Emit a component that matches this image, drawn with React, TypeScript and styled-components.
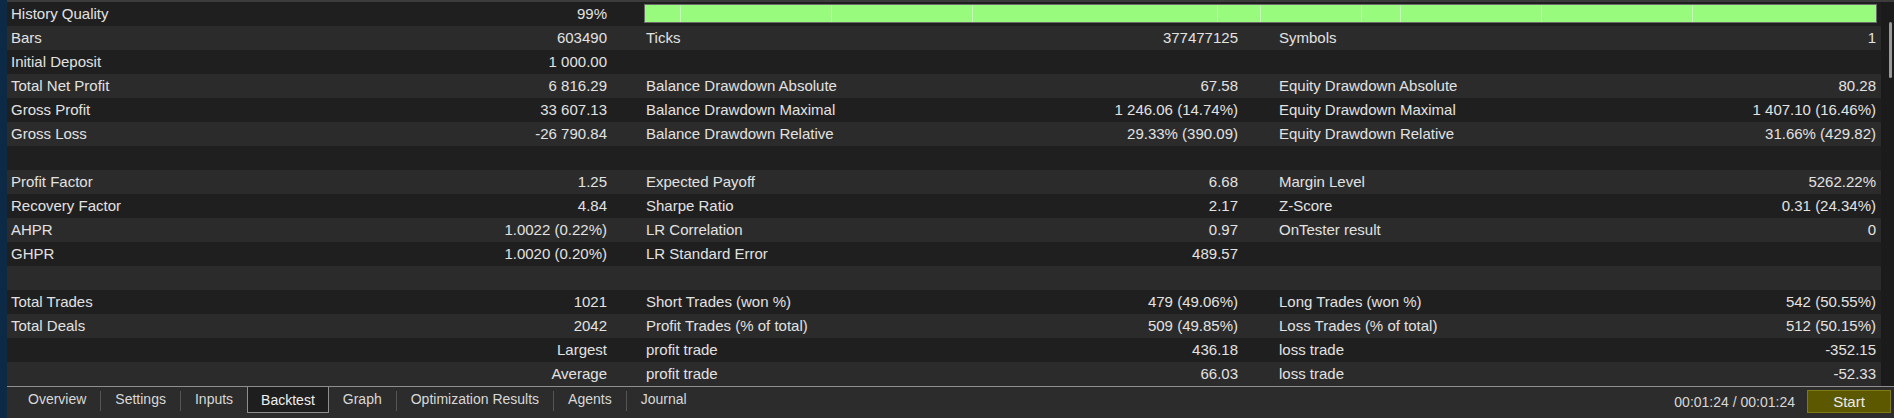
import React from "react";
import styled, { createGlobalStyle } from "styled-components";

type Cell = [string, string] | null;

const ROWS: Cell[][] = [
  [["Bars", "603490"], ["Ticks", "377477125"], ["Symbols", "1"]],
  [["Initial Deposit", "1 000.00"], null, null],
  [
    ["Total Net Profit", "6 816.29"],
    ["Balance Drawdown Absolute", "67.58"],
    ["Equity Drawdown Absolute", "80.28"],
  ],
  [
    ["Gross Profit", "33 607.13"],
    ["Balance Drawdown Maximal", "1 246.06 (14.74%)"],
    ["Equity Drawdown Maximal", "1 407.10 (16.46%)"],
  ],
  [
    ["Gross Loss", "-26 790.84"],
    ["Balance Drawdown Relative", "29.33% (390.09)"],
    ["Equity Drawdown Relative", "31.66% (429.82)"],
  ],
  [null, null, null],
  [["Profit Factor", "1.25"], ["Expected Payoff", "6.68"], ["Margin Level", "5262.22%"]],
  [["Recovery Factor", "4.84"], ["Sharpe Ratio", "2.17"], ["Z-Score", "0.31 (24.34%)"]],
  [["AHPR", "1.0022 (0.22%)"], ["LR Correlation", "0.97"], ["OnTester result", "0"]],
  [["GHPR", "1.0020 (0.20%)"], ["LR Standard Error", "489.57"], null],
  [null, null, null],
  [
    ["Total Trades", "1021"],
    ["Short Trades (won %)", "479 (49.06%)"],
    ["Long Trades (won %)", "542 (50.55%)"],
  ],
  [
    ["Total Deals", "2042"],
    ["Profit Trades (% of total)", "509 (49.85%)"],
    ["Loss Trades (% of total)", "512 (50.15%)"],
  ],
  [["", "Largest"], ["profit trade", "436.18"], ["loss trade", "-352.15"]],
  [["", "Average"], ["profit trade", "66.03"], ["loss trade", "-52.33"]],
];

// widths of the history quality segments, px
const QUALITY = [36, 151, 141, 245, 43, 101, 39, 141, 151, 183];

const TABS = [
  "Overview",
  "Settings",
  "Inputs",
  "Backtest",
  "Graph",
  "Optimization Results",
  "Agents",
  "Journal",
];
const ACTIVE = "Backtest";

const INDENT = [4, 35, 37];
const TRAIL = [4, 4, 5];

const GlobalStyle = createGlobalStyle`
  html, body {
    margin: 0;
    padding: 0;
    background: #1e1e1e;
  }
  body {
    font-family: "Liberation Sans", Arial, sans-serif;
    font-size: 15px;
    color: #e2e2e2;
  }
`;

const Window = styled.div`
  width: 1894px;
  height: 418px;
  display: flex;
  overflow: hidden;
`;

const Strip = styled.div`
  width: 7px;
  flex: none;
  background: #0c2a46;
`;

const Content = styled.div`
  flex: 1;
  min-width: 0;
  display: flex;
  flex-direction: column;
`;

const Report = styled.div`
  display: flex;
  border-top: 2px solid #3c3c3c;
`;

const Table = styled.div`
  flex: 1;
  display: flex;
  flex-direction: column;
`;

const Row = styled.div<{ $alt: boolean }>`
  display: grid;
  grid-template-columns: 604px 631px 1fr;
  height: 24px;
  background: ${(p) => (p.$alt ? "#2b2b2b" : "#1f1f1f")};
`;

const Pair = styled.div<{ $indent: number; $trail: number }>`
  display: flex;
  align-items: center;
  justify-content: space-between;
  padding: 0 ${(p) => p.$trail}px 1px ${(p) => p.$indent}px;
  white-space: nowrap;
`;

const QualityBar = styled.div`
  grid-column: 2 / 4;
  display: flex;
  margin: 2px 4px 3px 33px;
  border: 1px solid #6b6b6b;
  background: #98fb7e;
`;

const Mark = styled.div`
  flex: none;
  height: 100%;
  box-sizing: border-box;
  border-right: 1px solid rgba(255, 255, 255, 0.45);

  &:last-child {
    border-right: none;
    flex: 1;
  }
`;

const ScrollTrack = styled.div`
  width: 13px;
  flex: none;
  background: #1b1b1b;
  padding-top: 20px;
  box-sizing: border-box;
`;

const ScrollThumb = styled.div`
  width: 3px;
  height: 56px;
  margin-left: 8px;
  border-radius: 2px;
  background: #9a9a9a;
`;

const TabBar = styled.div`
  flex: 1;
  display: flex;
  align-items: flex-start;
  padding-left: 7px;
  background: #2c2c2c;
  border-top: 1px solid #8e8e8e;
  font-size: 14px;
`;

const Tab = styled.div<{ $active: boolean }>`
  height: ${(p) => (p.$active ? "26px" : "25px")};
  padding: 0 13px;
  display: flex;
  align-items: center;
  box-sizing: border-box;
  color: ${(p) => (p.$active ? "#f0f0f0" : "#d8d8d8")};
  background: ${(p) => (p.$active ? "#1e1e1e" : "transparent")};
  border: 1px solid ${(p) => (p.$active ? "#8e8e8e" : "transparent")};
  border-top: none;
`;

const TabSep = styled.div`
  width: 1px;
  height: 20px;
  margin-top: 4px;
  background: #555;
`;

const Status = styled.div`
  margin-left: auto;
  display: flex;
  align-items: center;
  gap: 12px;
  padding-top: 3px;
`;

const Timer = styled.span`
  color: #d8d8d8;
`;

const StartButton = styled.button`
  width: 84px;
  height: 23px;
  margin-right: 3px;
  background: #5c5800;
  border: 1px solid #7e7a14;
  color: #ececec;
  font-family: inherit;
  font-size: 15px;
  padding: 0;
`;

const Group = ({ cell, col }: { cell: Cell; col: number }) => (
  <Pair $indent={INDENT[col]} $trail={TRAIL[col]}>
    <span>{cell ? cell[0] : ""}</span>
    <span>{cell ? cell[1] : ""}</span>
  </Pair>
);

export default function App() {
  return (
    <>
      <GlobalStyle />
      <Window>
        <Strip />
        <Content>
          <Report>
            <Table>
              <Row $alt={false}>
                <Group cell={["History Quality", "99%"]} col={0} />
                <QualityBar>
                  {QUALITY.map((w, i) => (
                    <Mark key={i} style={{ width: w }} />
                  ))}
                </QualityBar>
              </Row>
              {ROWS.map((cells, i) => (
                <Row key={i} $alt={i % 2 === 0}>
                  {cells.map((cell, c) => (
                    <Group key={c} cell={cell} col={c} />
                  ))}
                </Row>
              ))}
            </Table>
            <ScrollTrack>
              <ScrollThumb />
            </ScrollTrack>
          </Report>
          <TabBar>
            {TABS.map((name, i) => {
              const prev = TABS[i - 1];
              const sep = i > 0 && name !== ACTIVE && prev !== ACTIVE;
              return (
                <React.Fragment key={name}>
                  {sep && <TabSep />}
                  <Tab $active={name === ACTIVE}>{name}</Tab>
                </React.Fragment>
              );
            })}
            <Status>
              <Timer>00:01:24 / 00:01:24</Timer>
              <StartButton>Start</StartButton>
            </Status>
          </TabBar>
        </Content>
      </Window>
    </>
  );
}
